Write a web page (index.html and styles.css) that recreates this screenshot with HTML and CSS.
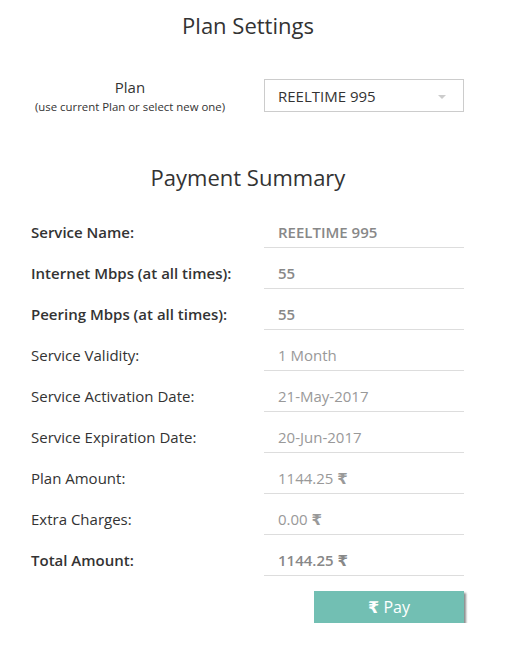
FILE: index.html
```html
<!DOCTYPE html>
<html lang="en">
<head>
  <meta charset="UTF-8">
  <meta name="viewport" content="width=device-width, initial-scale=1.0">
  <title>Plan Settings</title>
  <link rel="stylesheet" href="styles.css">
</head>
<body>
  <div class="container">
    <h1 class="title">Plan Settings</h1>

    <div class="plan-row">
      <div class="plan-label">
        <div class="plan-name">Plan</div>
        <div class="plan-hint">(use current Plan or select new one)</div>
      </div>
      <div class="select-box">
        <span class="select-value">REELTIME 995</span>
        <span class="select-caret"></span>
      </div>
    </div>

    <h2 class="title summary-title">Payment Summary</h2>

    <div class="summary">
      <div class="summary-row bold">
        <div class="summary-label">Service Name:</div>
        <div class="summary-value">REELTIME 995</div>
      </div>
      <div class="summary-row bold">
        <div class="summary-label">Internet Mbps (at all times):</div>
        <div class="summary-value">55</div>
      </div>
      <div class="summary-row bold">
        <div class="summary-label">Peering Mbps (at all times):</div>
        <div class="summary-value">55</div>
      </div>
      <div class="summary-row">
        <div class="summary-label">Service Validity:</div>
        <div class="summary-value">1 Month</div>
      </div>
      <div class="summary-row">
        <div class="summary-label">Service Activation Date:</div>
        <div class="summary-value">21-May-2017</div>
      </div>
      <div class="summary-row">
        <div class="summary-label">Service Expiration Date:</div>
        <div class="summary-value">20-Jun-2017</div>
      </div>
      <div class="summary-row">
        <div class="summary-label">Plan Amount:</div>
        <div class="summary-value">1144.25 <span class="rupee">₹</span></div>
      </div>
      <div class="summary-row">
        <div class="summary-label">Extra Charges:</div>
        <div class="summary-value">0.00 <span class="rupee">₹</span></div>
      </div>
      <div class="summary-row bold">
        <div class="summary-label">Total Amount:</div>
        <div class="summary-value">1144.25 <span class="rupee">₹</span></div>
      </div>
    </div>

    <div class="actions">
      <button class="pay-button"><span class="rupee">₹</span> Pay</button>
    </div>
  </div>
</body>
</html>
```

FILE: styles.css
```css
body {
  font-family: "Open Sans", "DejaVu Sans", sans-serif;
  margin: 0;
  padding: 0;
  background-color: #fff;
  color: #333;
}
.container {
  width: 434px;
  padding: 10px 0 0 31px;
}
.title {
  font-size: 22px;
  font-weight: normal;
  line-height: 30px;
  margin: 0;
  color: #333;
  text-align: center;
}
.plan-row {
  display: flex;
  align-items: center;
  margin-top: 37px;
}
.plan-label {
  width: 198px;
  margin-right: 35px;
  text-align: center;
}
.plan-name {
  font-size: 15px;
  line-height: 20px;
}
.plan-hint {
  font-size: 11.4px;
  line-height: 14px;
  margin-top: 3px;
}
.select-box {
  width: 200px;
  height: 33px;
  border: 1px solid #ccc;
  display: flex;
  align-items: center;
  justify-content: space-between;
  padding: 0 17px 0 13px;
  box-sizing: border-box;
}
.select-value {
  font-size: 15px;
  color: #333;
}
.select-caret {
  width: 0;
  height: 0;
  border-left: 4px solid transparent;
  border-right: 4px solid transparent;
  border-top: 4px solid #ccc;
  margin-top: 2px;
}
.summary-title {
  margin-top: 48px;
}
.summary {
  margin-top: 23px;
}
.summary-row {
  display: flex;
  margin-bottom: 8px;
  font-size: 15px;
  line-height: 20px;
}
.summary-label {
  width: 233px;
  padding-top: 7px;
  color: #333;
}
.summary-value {
  width: 200px;
  box-sizing: border-box;
  padding: 7px 0 5px 14px;
  border-bottom: 1px solid #ddd;
  color: #999;
}
.bold .summary-label {
  font-weight: 600;
}
.bold .summary-value {
  font-weight: 600;
  color: #888;
}
.rupee {
  font-weight: 600;
}
.actions {
  display: flex;
  justify-content: flex-end;
  margin-top: 15px;
  width: 433px;
}
.pay-button {
  width: 150px;
  height: 32px;
  background-color: #72bfb3;
  color: #fff;
  border: none;
  font-family: "Open Sans", "DejaVu Sans", sans-serif;
  font-size: 16px;
  box-shadow: 2px 2px 2px rgba(0, 0, 0, 0.45);
  cursor: pointer;
}
```
